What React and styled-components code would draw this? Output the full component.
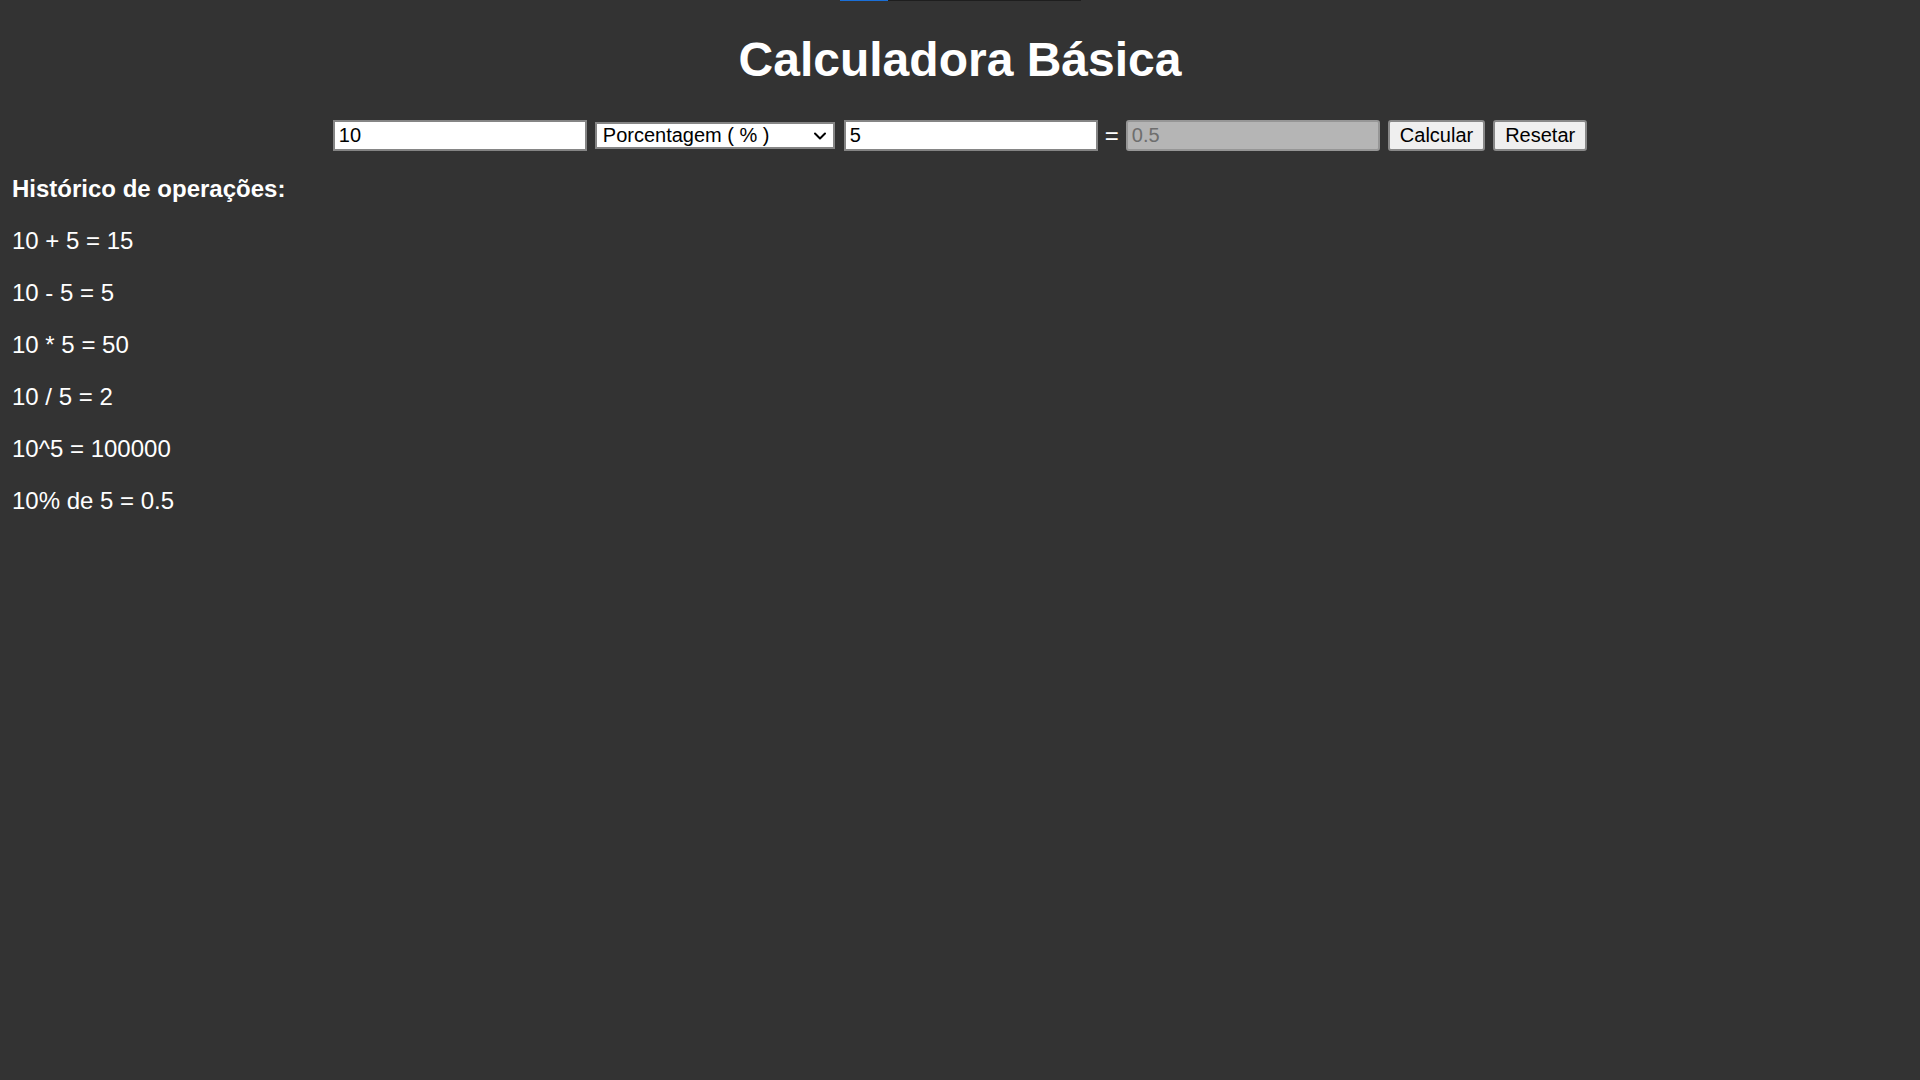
import styled, { createGlobalStyle } from "styled-components";
import { ChevronDown } from "lucide-react";

const history = [
  "10 + 5 = 15",
  "10 - 5 = 5",
  "10 * 5 = 50",
  "10 / 5 = 2",
  "10^5 = 100000",
  "10% de 5 = 0.5",
];

const App = () => {
  return (
    <Page>
      <GlobalStyle />
      <TopBar>
        <TopBarFill />
      </TopBar>
      <Title>Calculadora Básica</Title>
      <Form>
        <NumberInput type="text" defaultValue="10" />
        <SelectWrap>
          <Select defaultValue="pct">
            <option value="add">Soma ( + )</option>
            <option value="sub">Subtração ( - )</option>
            <option value="mul">Multiplicação ( * )</option>
            <option value="div">Divisão ( / )</option>
            <option value="pow">Potência ( ^ )</option>
            <option value="pct">Porcentagem ( % )</option>
          </Select>
          <Chevron size={20} strokeWidth={2.4} />
        </SelectWrap>
        <NumberInput type="text" defaultValue="5" />
        <Equals>=</Equals>
        <ResultInput type="text" value="0.5" readOnly />
        <Button>Calcular</Button>
        <Button>Resetar</Button>
      </Form>
      <HistoryTitle>Histórico de operações:</HistoryTitle>
      {history.map((item) => (
        <HistoryItem key={item}>{item}</HistoryItem>
      ))}
    </Page>
  );
};

const GlobalStyle = createGlobalStyle`
  html, body {
    background: #333333;
  }
  body {
    margin: 0;
    color: #ffffff;
    font-family: "Liberation Sans", Arial, sans-serif;
    font-size: 24px;
  }
`;

const Page = styled.div`
  padding: 32px 12px 0;
`;

const TopBar = styled.div`
  position: fixed;
  top: 0;
  left: 840px;
  width: 241px;
  height: 1px;
  background: #1e1e1e;
`;

const TopBarFill = styled.div`
  width: 48px;
  height: 100%;
  background: #1a6fd8;
`;

const Title = styled.h1`
  font-size: 48px;
  font-weight: bold;
  text-align: center;
  margin: 0 0 33px;
`;

const Form = styled.div`
  display: flex;
  justify-content: center;
  align-items: center;
  gap: 8px;
  height: 31px;
`;

const NumberInput = styled.input`
  box-sizing: border-box;
  width: 254px;
  height: 31px;
  padding: 1px 4px;
  border: 2px solid #858585;
  border-radius: 0;
  background: #ffffff;
  color: #000000;
  font-family: "Liberation Sans", Arial, sans-serif;
  font-size: 20px;
  outline: none;
`;

const ResultInput = styled(NumberInput)`
  background: #b5b5b5;
  color: #6e6e6e;
  border-color: #969696;
  border-radius: 3px;
`;

const SelectWrap = styled.div`
  position: relative;
  display: flex;
  margin-right: 1px;
`;

const Select = styled.select`
  appearance: none;
  box-sizing: border-box;
  width: 240px;
  height: 27px;
  padding: 0 28px 0 6px;
  border: 2px solid #858585;
  border-radius: 0;
  background: #ffffff;
  color: #000000;
  font-family: "Liberation Sans", Arial, sans-serif;
  font-size: 20px;
  line-height: 23px;
`;

const Chevron = styled(ChevronDown)`
  position: absolute;
  right: 5px;
  top: 4px;
  color: #000000;
  pointer-events: none;
`;

const Equals = styled.span`
  font-size: 24px;
  line-height: 1;
  color: #ffffff;
  margin: 0 -1px;
`;

const Button = styled.button`
  box-sizing: border-box;
  height: 31px;
  padding: 0 10px;
  border: 2px solid #888888;
  border-radius: 3px;
  background: #efefef;
  color: #000000;
  font-family: "Liberation Sans", Arial, sans-serif;
  font-size: 20px;
`;

const HistoryTitle = styled.p`
  font-weight: bold;
  margin: 24px 0;
`;

const HistoryItem = styled.p`
  margin: 24px 0;
`;

export default App;
